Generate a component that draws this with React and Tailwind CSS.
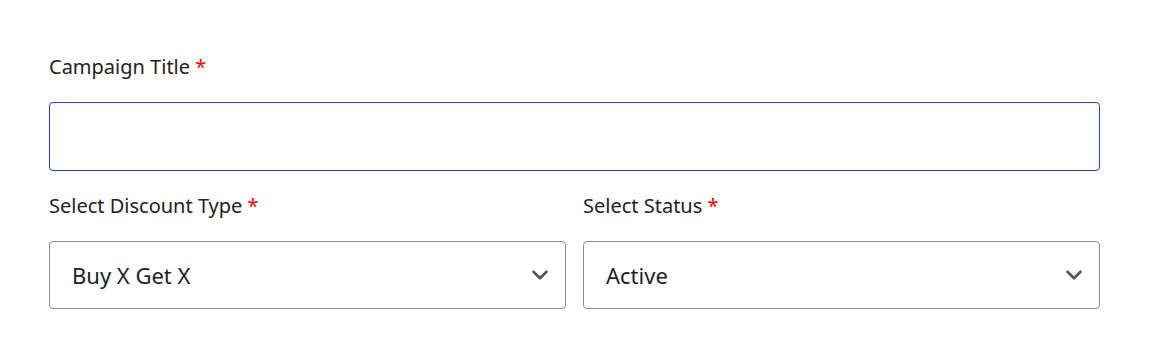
import React from 'react';
import { ChevronDown } from 'lucide-react';

const Label = ({ children }) => (
  <label className="block text-[20px] leading-[27px] text-[#222] mb-[22px]">
    {children} <span className="text-[#ff0000]">*</span>
  </label>
);

const SelectBox = ({ value }) => (
  <div className="flex items-center justify-between h-[68px] rounded-[4px] border border-[#8c8c8c] bg-white pl-[22px] pr-[12px]">
    <span className="text-[22px] text-[#222]">{value}</span>
    <ChevronDown className="w-[26px] h-[26px] text-[#555]" strokeWidth={2.4} />
  </div>
);

export default function App() {
  return (
    <div className="bg-white min-h-[359px] pt-[53px] px-[49px]" style={{ fontFamily: '"Noto Sans", sans-serif' }}>
      <div className="w-[1051px]">
        <Label>Campaign Title</Label>
        <input
          type="text"
          className="block w-full h-[69px] rounded-[4px] border border-[#2243d6] bg-white px-[22px] text-[22px] outline-none"
        />
        <div className="grid grid-cols-2 gap-[17px] mt-[21px]">
          <div>
            <Label>Select Discount Type</Label>
            <SelectBox value="Buy X Get X" />
          </div>
          <div>
            <Label>Select Status</Label>
            <SelectBox value="Active" />
          </div>
        </div>
      </div>
    </div>
  );
}
